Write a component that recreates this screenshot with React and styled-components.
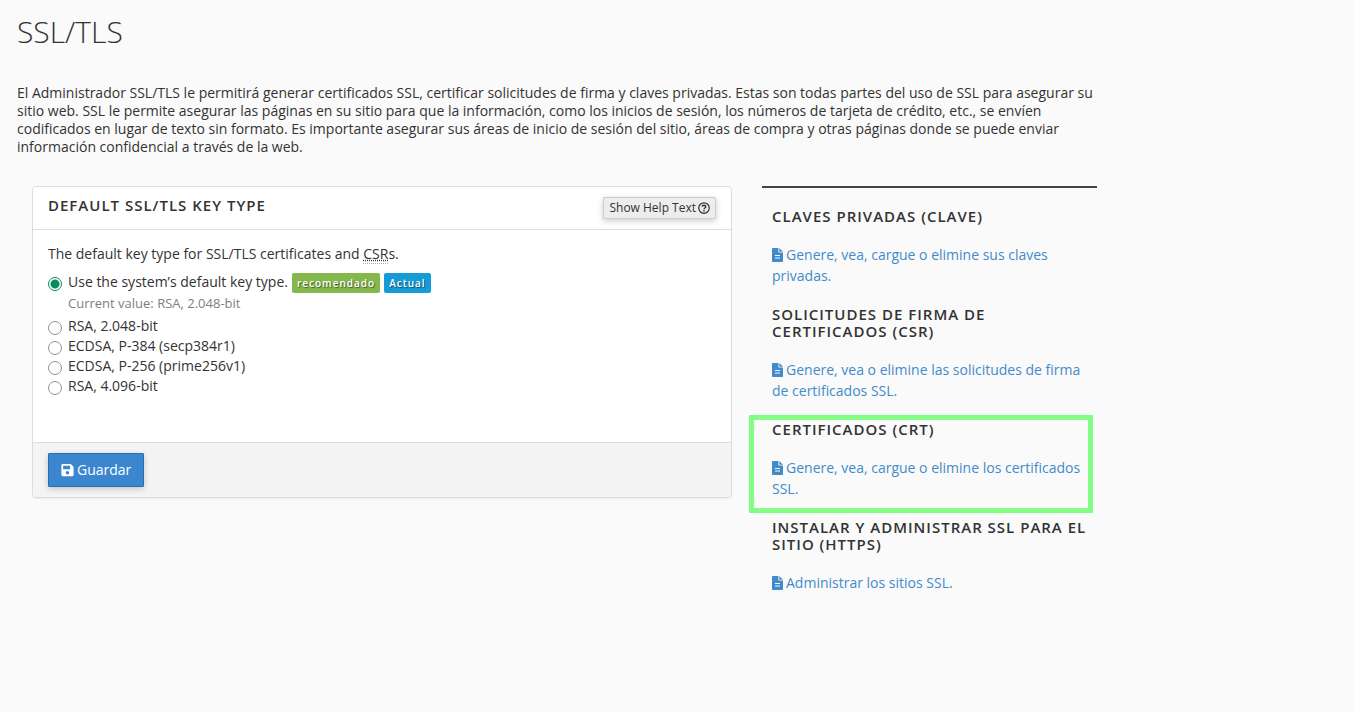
import React, { useState } from "react";
import styled, { createGlobalStyle } from "styled-components";

const GlobalStyle = createGlobalStyle`
  *, *::before, *::after { box-sizing: border-box; }
  body {
    margin: 0;
    background: #fafafa;
    color: #333;
    font-family: "Open Sans", "Noto Sans", sans-serif;
    font-size: 14px;
    line-height: 18px;
  }
`;

const Page = styled.main`
  max-width: 1129px;
  padding: 15px 17px;
`;

const Title = styled.h1`
  margin: 0 0 35px;
  font-size: 30px;
  font-weight: 300;
  line-height: 34px;
`;

const Intro = styled.p`
  margin: 0 0 30px;
`;

const Columns = styled.div`
  display: grid;
  grid-template-columns: 2fr 1fr;
  align-items: start;
`;

const Column = styled.div`
  padding: 0 15px;
`;

const Panel = styled.form`
  background: #fff;
  border: 1px solid #ddd;
  border-radius: 4px;
  box-shadow: 0 1px 1px rgba(0, 0, 0, 0.05);
  overflow: hidden;
`;

const PanelHeader = styled.div`
  display: flex;
  justify-content: space-between;
  align-items: flex-start;
  padding: 10px 15px;
  border-bottom: 1px solid #ddd;
`;

const Heading = styled.h2`
  margin: 0;
  font-size: 15px;
  font-weight: 600;
  line-height: 17px;
  letter-spacing: 1px;
  text-transform: uppercase;
`;

const HelpButton = styled.button`
  display: flex;
  align-items: center;
  gap: 2px;
  height: 22px;
  padding: 0 5px;
  border: 1px solid #ccc;
  border-radius: 1px;
  background: #eceded;
  box-shadow: 0 2px 6px rgba(0, 0, 0, 0.2);
  color: #333;
  font: 12px/18px "Open Sans", sans-serif;
`;

const PanelBody = styled.fieldset`
  min-width: 0;
  margin: 0;
  padding: 15px 15px 46px;
  border: 0;
`;

const Lead = styled.p`
  margin: 0 0 9px;
`;

const Abbr = styled.abbr`
  border-bottom: 1px dotted #aaa;
  text-decoration: underline dotted;
`;

const Option = styled.div`
  display: grid;
  grid-template-columns: 14px 1fr;
  column-gap: 6px;
  line-height: 20px;
`;

const Radio = styled.input`
  appearance: none;
  width: 14px;
  height: 14px;
  margin: 5px 0 0;
  border: 1px solid ${(p) => (p.checked ? "#0a8a5f" : "#8f8f9d")};
  border-radius: 50%;
  background: ${(p) => (p.checked ? "radial-gradient(circle, #0a8a5f 4px, #fff 5px)" : "#fff")};
`;

const Note = styled.div`
  padding: 1px 0 4px;
  color: #808080;
  font-size: 13px;
  line-height: 18px;
`;

const Badge = styled.span`
  display: inline-block;
  margin-left: 4px;
  padding: 0 5px;
  border-radius: 2px;
  background: ${(p) => p.$color};
  color: #fff;
  font-size: 10px;
  font-weight: 600;
  line-height: 20px;
  letter-spacing: 1px;
  text-shadow: 1px 1px 1px rgba(0, 0, 0, 0.5);
`;

const PanelFooter = styled.div`
  padding: 10px 15px;
  border-top: 1px solid #ddd;
  background: #f4f4f4;
`;

const SaveButton = styled.button`
  display: flex;
  align-items: center;
  gap: 3px;
  height: 34px;
  padding: 0 12px;
  border: 1px solid #2a6fb4;
  border-radius: 1px;
  background: #3a87cf;
  box-shadow: 0 2px 6px rgba(0, 0, 0, 0.2);
  color: #fff;
  font: 14px/20px "Open Sans", sans-serif;
`;

const Sidebar = styled.aside`
  padding: 20px 10px 0;
  border-top: 2px solid #444;
`;

const Section = styled.section`
  position: relative;
  margin-bottom: 20px;
`;

const SectionLink = styled.a`
  display: block;
  margin-top: 19px;
  color: #428bca;
  line-height: 21px;
  text-decoration: none;
`;

const Highlight = styled.div`
  position: absolute;
  inset: -6px -6px -14px -23px;
  border: 5px solid #84fd84;
  pointer-events: none;
`;

const InlineIcon = styled.svg`
  margin-right: 3px;
  vertical-align: -2px;
`;

const FileIcon = () => (
  <InlineIcon width="11" height="14" viewBox="0 0 11 14" aria-hidden="true">
    <path
      fill="currentColor"
      fillRule="evenodd"
      d="M0.700 0H6.400V3.900C6.400 4.300 6.700 4.600 7.100 4.600H11V13.300C11 13.700 10.700 14 10.300 14H0.700C0.300 14 0 13.700 0 13.300V0.700C0 0.300 0.300 0 0.700 0ZM3 7V8H8V7ZM3 9.500V10.500H8V9.500Z"
    />
    <path fill="currentColor" d="M7.300 0 11 3.700H7.300Z" />
  </InlineIcon>
);

const SaveIcon = () => (
  <svg width="13" height="14" viewBox="0 0 448 512" aria-hidden="true">
    <path fill="currentColor" d="M434 130 350 46c-9-9-21-14-34-14H48C22 32 0 54 0 80v352c0 27 22 48 48 48h352c27 0 48-21 48-48V164c0-13-5-25-14-34zM224 416c-35 0-64-29-64-64s29-64 64-64 64 29 64 64-29 64-64 64zm96-305v101c0 7-5 12-12 12H76c-7 0-12-5-12-12V108c0-7 5-12 12-12h229c3 0 6 1 8 3l4 4c2 2 3 5 3 8z" />
  </svg>
);

const HelpIcon = () => (
  <svg width="12" height="12" viewBox="0 0 24 24" fill="none" stroke="currentColor" strokeWidth="2.500" aria-hidden="true">
    <circle cx="12" cy="12" r="10.500" />
    <path strokeWidth="3" d="M8.500 9.500C8.500 5.500 15.500 5.500 15.500 9.500c0 2.500-3.500 2.500-3.500 5" />
    <path strokeWidth="3" d="M12 16v3" />
  </svg>
);

const options = [
  { id: "system", label: "Use the system’s default key type.", note: "Current value: RSA, 2.048-bit" },
  { id: "rsa-2048", label: "RSA, 2.048-bit" },
  { id: "ecdsa-384", label: "ECDSA, P-384 (secp384r1)" },
  { id: "ecdsa-256", label: "ECDSA, P-256 (prime256v1)" },
  { id: "rsa-4096", label: "RSA, 4.096-bit" },
];

const sections = [
  { title: "Claves privadas (CLAVE)", link: "Genere, vea, cargue o elimine sus claves privadas." },
  { title: "Solicitudes de firma de certificados (CSR)", link: "Genere, vea o elimine las solicitudes de firma de certificados SSL." },
  { title: "Certificados (CRT)", link: "Genere, vea, cargue o elimine los certificados SSL.", highlighted: true },
  { title: "Instalar y administrar SSL para el sitio (HTTPS)", link: "Administrar los sitios SSL." },
];

export default function App() {
  const [keyType, setKeyType] = useState("system");
  return (
    <>
      <GlobalStyle />
      <Page>
        <Title>SSL/TLS</Title>
        <Intro>
          El Administrador SSL/TLS le permitirá generar certificados SSL, certificar solicitudes de firma y claves
          privadas. Estas son todas partes del uso de SSL para asegurar su sitio web. SSL le permite asegurar las
          páginas en su sitio para que la información, como los inicios de sesión, los números de tarjeta de crédito,
          etc., se envíen codificados en lugar de texto sin formato. Es importante asegurar sus áreas de inicio de
          sesión del sitio, áreas de compra y otras páginas donde se puede enviar información confidencial a través de
          la web.
        </Intro>
        <Columns>
          <Column>
            <Panel onSubmit={(e) => e.preventDefault()}>
              <PanelHeader>
                <Heading>Default SSL/TLS Key Type</Heading>
                <HelpButton type="button">
                  Show Help Text <HelpIcon />
                </HelpButton>
              </PanelHeader>
              <PanelBody aria-label="Default SSL/TLS key type">
                <Lead>
                  The default key type for SSL/TLS certificates and <Abbr title="Certificate Signing Request">CSR</Abbr>s.
                </Lead>
                {options.map((o) => (
                  <Option key={o.id}>
                    <Radio
                      type="radio"
                      name="keyType"
                      id={o.id}
                      checked={keyType === o.id}
                      onChange={() => setKeyType(o.id)}
                    />
                    <div>
                      <label htmlFor={o.id}>{o.label}</label>
                      {o.note && (
                        <>
                          <Badge $color="#84b84c">recomendado</Badge>
                          <Badge $color="#179bd7">Actual</Badge>
                          <Note>{o.note}</Note>
                        </>
                      )}
                    </div>
                  </Option>
                ))}
              </PanelBody>
              <PanelFooter>
                <SaveButton type="submit">
                  <SaveIcon /> Guardar
                </SaveButton>
              </PanelFooter>
            </Panel>
          </Column>
          <Column>
            <Sidebar>
              {sections.map((s) => (
                <Section key={s.title}>
                  <Heading>{s.title}</Heading>
                  <SectionLink href="#">
                    <FileIcon />
                    {s.link}
                  </SectionLink>
                  {s.highlighted && <Highlight />}
                </Section>
              ))}
            </Sidebar>
          </Column>
        </Columns>
      </Page>
    </>
  );
}
